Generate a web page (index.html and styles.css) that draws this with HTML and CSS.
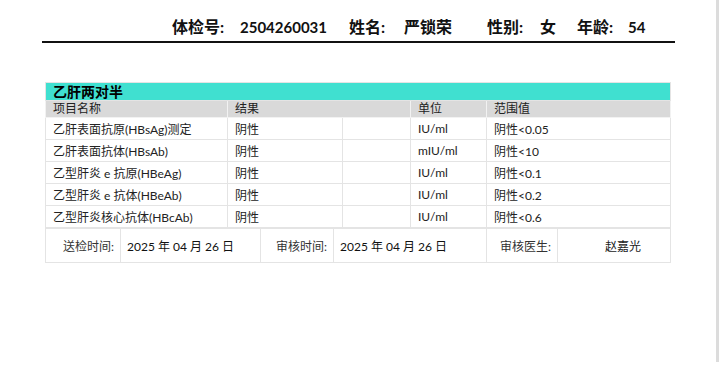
FILE: index.html
```html
<!DOCTYPE html>
<html>
<head>
<meta charset="utf-8">
<link rel="stylesheet" href="styles.css">
</head>
<body>
<div class="page">
  <div class="head">
    <span class="lbl w-no">体检号:</span><span class="val num w-nov">2504260031</span>
    <span class="lbl w-name">姓名:</span><span class="val w-namev">严锁荣</span>
    <span class="lbl w-sex">性别:</span><span class="val w-sexv">女</span>
    <span class="lbl w-age">年龄:</span><span class="val num">54</span>
  </div>
  <div class="rule"></div>

  <table class="report">
    <colgroup>
      <col class="c1"><col class="c2"><col class="c3"><col class="c4"><col class="c5">
    </colgroup>
    <tr class="title"><td colspan="5">乙肝两对半</td></tr>
    <tr class="thead"><td>项目名称</td><td colspan="2">结果</td><td>单位</td><td>范围值</td></tr>
    <tr><td>乙肝表面抗原(HBsAg)测定</td><td>阴性</td><td></td><td>IU/ml</td><td>阴性&lt;0.05</td></tr>
    <tr><td>乙肝表面抗体(HBsAb)</td><td>阴性</td><td></td><td>mIU/ml</td><td>阴性&lt;10</td></tr>
    <tr><td>乙型肝炎 e 抗原(HBeAg)</td><td>阴性</td><td></td><td>IU/ml</td><td>阴性&lt;0.1</td></tr>
    <tr><td>乙型肝炎 e 抗体(HBeAb)</td><td>阴性</td><td></td><td>IU/ml</td><td>阴性&lt;0.2</td></tr>
    <tr><td>乙型肝炎核心抗体(HBcAb)</td><td>阴性</td><td></td><td>IU/ml</td><td>阴性&lt;0.6</td></tr>
  </table>
  <table class="foot">
    <colgroup>
      <col class="f1"><col class="f2"><col class="f3"><col class="f4"><col class="f5"><col class="f6">
    </colgroup>
    <tr>
      <td class="k">送检时间:</td><td class="d">2025 年 04 月 26 日</td>
      <td class="k">审核时间:</td><td class="d">2025 年 04 月 26 日</td>
      <td class="k">审核医生:</td><td class="doc">赵嘉光</td>
    </tr>
  </table>
</div>
</body>
</html>
```

FILE: styles.css
```css
html, body {
  margin: 0;
  padding: 0;
  background: #fff;
}
body {
  font-family: Lato, "Noto Sans CJK SC", sans-serif;
  color: #222;
}
.page {
  box-sizing: border-box;
  height: 362px;
  border-right: 3px solid #dcdcdc;
  width: 719px;
  padding-top: 15px;
}
.head {
  display: flex;
  align-items: baseline;
  margin-left: 172px;
  font-weight: bold;
  font-size: 16px;
  color: #111;
  height: 24px;
  line-height: 24px;
}
.head .num { font-size: 15px; }
.w-no { width: 68px; }
.w-nov { width: 109px; }
.w-name { width: 55px; }
.w-namev { width: 83px; }
.w-sex { width: 53px; }
.w-sexv { width: 37px; }
.w-age { width: 51px; }
.rule {
  margin-left: 42px;
  width: 633px;
  height: 2px;
  background: #111;
  margin-top: 2px;
}
table {
  border-collapse: collapse;
  margin-left: 45px;
  width: 625px;
  table-layout: fixed;
  font-size: 12px;
}
.report { margin-top: 39px; }
.report td, .foot td {
  border: 1px solid #e4e4e4;
  padding: 0 0 0 7px;
  height: 21px;
  white-space: nowrap;
  overflow: hidden;
}
.c1 { width: 182px; }
.c2 { width: 115px; }
.c3 { width: 68px; }
.c4 { width: 76px; }
.c5 { width: 184px; }
.report .title td {
  background: #40e0d0;
  font-weight: bold;
  font-size: 14px;
  color: #000;
  height: 17px;
  line-height: 17px;
  border-color: #e4e4e4;
}
.report .thead td {
  background: #d9d9d9;
  height: 16px;
  line-height: 16px;
  border-color: #f2f2f2;
}
.f1 { width: 75px; }
.f2 { width: 140px; }
.f3 { width: 73px; }
.f4 { width: 153px; }
.f5 { width: 71px; }
.f6 { width: 113px; }
.foot td { height: 33px; }
.foot td.k { text-align: right; padding: 0 6px 0 0; color: #333; }
.foot td.d { color: #111; padding-left: 6px; }
.foot td.doc { text-align: center; padding: 0 0 0 18px; }
```
